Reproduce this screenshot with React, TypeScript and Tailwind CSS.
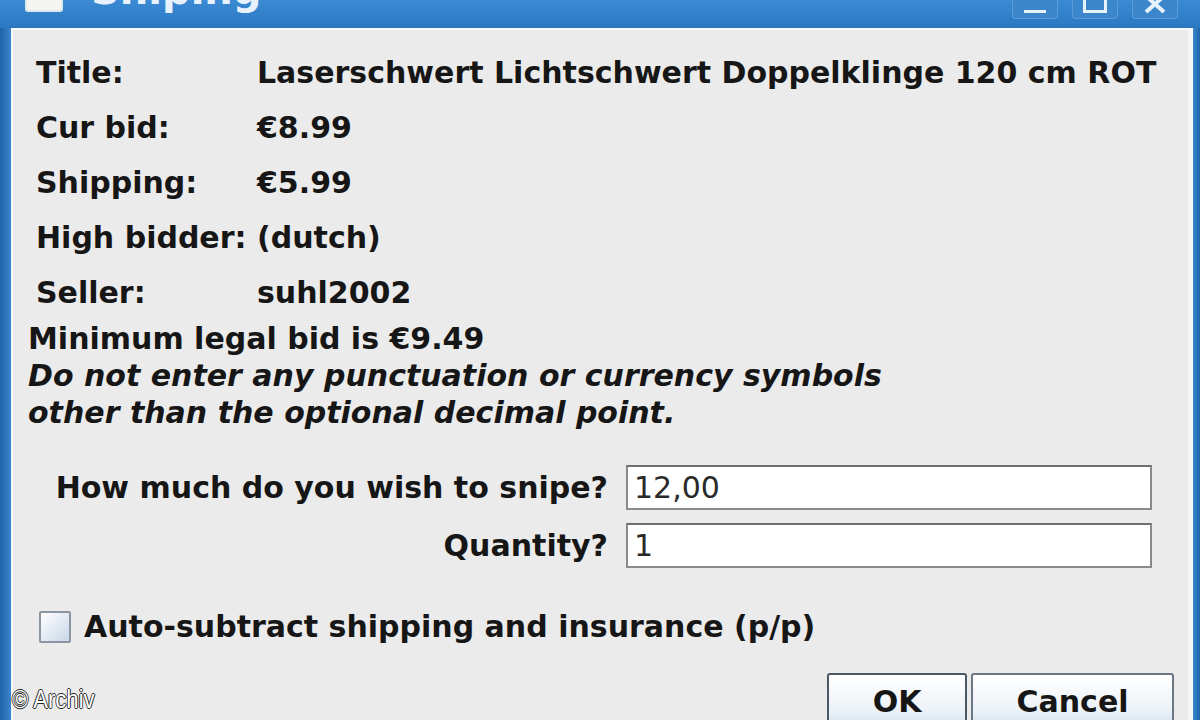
import React from "react";

const FONT = "font-['DejaVu_Sans',_'Liberation_Sans',_sans-serif]";

const ROWS: { label: string; value: string }[] = [
  { label: "Title:", value: "Laserschwert Lichtschwert Doppelklinge 120 cm ROT" },
  { label: "Cur bid:", value: "€8.99" },
  { label: "Shipping:", value: "€5.99" },
  { label: "High bidder:", value: "(dutch)" },
  { label: "Seller:", value: "suhl2002" },
];

function WinButton({ children }: { children: React.ReactNode }) {
  return (
    <div className="flex h-[19px] w-[46px] items-center justify-center rounded-b-[4px] border border-t-0 border-[#5b9bd8] bg-[#3c86cc]">
      {children}
    </div>
  );
}

function TitleBar() {
  return (
    <div className="flex h-[28px] shrink-0 items-start overflow-hidden bg-gradient-to-b from-[#3b8ad4] to-[#2a78c2]">
      <div className="ml-[25px] mt-[-14px] h-[26px] w-[38px] rounded-[3px] border-2 border-[#dfe8f0] bg-[#f4f4f0]" />
      <span className={`${FONT} ml-[28px] mt-[-30px] text-[40px] font-bold leading-none text-[#e8f2fc]`}>
        Shiping
      </span>
      <div className="ml-auto mr-[22px] flex gap-[14px]">
        <WinButton>
          <div className="mt-[4px] h-[3px] w-[22px] bg-[#e8f2fc]" />
        </WinButton>
        <WinButton>
          <div className="mt-[-6px] h-[14px] w-[24px] border-[3px] border-t-0 border-[#e8f2fc]" />
        </WinButton>
        <WinButton>
          <svg width="30" height="19" viewBox="0 0 30 19">
            <path d="M6 -4 L24 12 M24 -4 L6 12" stroke="#e8f2fc" strokeWidth="4" />
          </svg>
        </WinButton>
      </div>
    </div>
  );
}

function Field({ label, value }: { label: string; value: string }) {
  return (
    <div className="flex items-center">
      <span className="w-[613px] shrink-0 pr-[18px] text-right font-bold">{label}</span>
      <div className="flex h-[45px] w-[526px] items-center border-2 border-[#8a8a8a] border-t-[#6e6e6e] bg-white pl-[6px] leading-none text-[#2a2a2a]">
        {value}
      </div>
    </div>
  );
}

export default function App() {
  return (
    <div className={`${FONT} relative flex h-[720px] w-[1200px] flex-col overflow-hidden bg-[#2a74bc]`}>
      <TitleBar />
      <div className="flex min-h-0 flex-1">
        <div className="w-[11px] shrink-0 bg-gradient-to-r from-[#1f63a8] to-[#3a86cc]" />
        <div className="flex flex-1 flex-col border-l-2 border-t-2 border-r-[5px] border-l-[#f6f8fa] border-t-[#f8f9fa] border-r-[#f4f6f8] bg-[#ebebeb] text-[30px] text-[#161616]">
          <div className="pt-[15px] pl-[23px]">
            {ROWS.map((r) => (
              <div key={r.label} className="flex h-[55px] items-center font-bold">
                <span className="w-[221px] shrink-0">{r.label}</span>
                <span className="whitespace-nowrap">{r.value}</span>
              </div>
            ))}
          </div>
          <div className="pl-[15px] font-bold leading-[37px]">
            <div>Minimum legal bid is €9.49</div>
            <div className="italic">Do not enter any punctuation or currency symbols</div>
            <div className="italic">other than the optional decimal point.</div>
          </div>

          <div className="mt-[34px] flex flex-col gap-[13px]">
            <Field label="How much do you wish to snipe?" value="12,00" />
            <Field label="Quantity?" value="1" />
          </div>

          <div className="mt-[36px] flex items-center pl-[26px]">
            <div className="h-[32px] w-[32px] shrink-0 rounded-[2px] border-2 border-[#8c96a2] bg-gradient-to-br from-[#ffffff] to-[#c8d6e6]" />
            <span className="ml-[13px] font-bold">Auto-subtract shipping and insurance (p/p)</span>
          </div>

          <div className="mt-[24px] flex justify-end pr-[14px]">
            <button className="flex h-[70px] w-[140px] items-start justify-center rounded-t-[3px] border-2 border-[#4a5866] bg-gradient-to-b from-[#ffffff] via-[#eef3f8] to-[#c4d6ea] pt-[4px] font-bold">
              OK
            </button>
            <button className="ml-[4px] flex h-[70px] w-[203px] items-start justify-center rounded-t-[3px] border-2 border-[#6a7886] bg-gradient-to-b from-[#ffffff] via-[#eef3f8] to-[#c4d6ea] pt-[4px] font-bold">
              Cancel
            </button>
          </div>
        </div>
        <div className="w-[7px] shrink-0 bg-gradient-to-r from-[#3a86cc] to-[#1f63a8]" />
      </div>
      <span className="absolute left-[12px] top-[680px] origin-left scale-x-[0.85] font-['Liberation_Sans',_sans-serif] text-[26px] text-white [text-shadow:_-1px_0_#222,_1px_0_#222,_0_1px_#222,_0_-1px_#222]">
        © Archiv
      </span>
    </div>
  );
}
